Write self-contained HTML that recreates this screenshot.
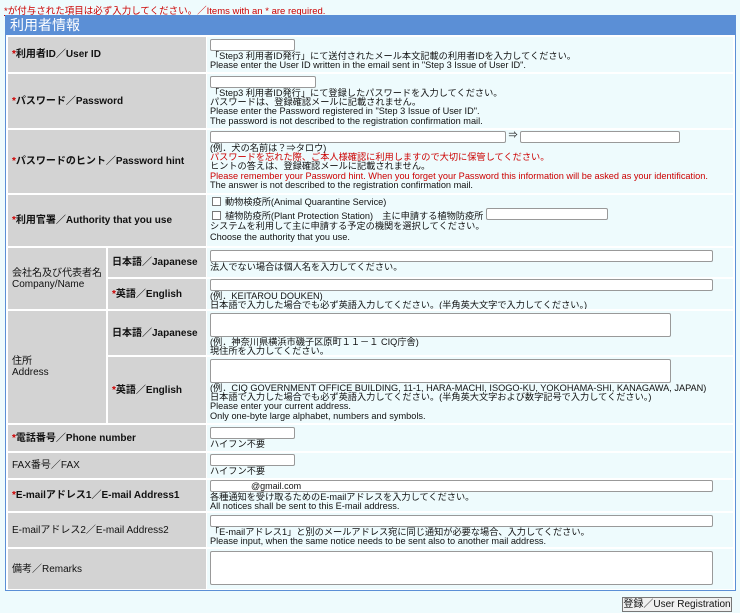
<!DOCTYPE html>
<html><head><meta charset="utf-8"><style>
*{margin:0;padding:0;box-sizing:border-box}
body{width:740px;height:613px;background:#eefbfd;font-family:"Liberation Sans","Noto Sans CJK JP",sans-serif;font-size:9.5px;color:#111;position:relative;overflow:hidden}
.a{position:absolute}
.lab{position:absolute;background:#d3d3d3;font-weight:bold;font-size:10px;display:flex;align-items:center;padding-left:4px;line-height:11px}
.val{position:absolute;background:#eefbfd;left:207px;width:526px;padding:2px 0 0 3px;line-height:9.2px;font-size:9.2px;overflow:hidden}
.r{color:#c00}
.in{display:block;border:1px solid #999;border-radius:2px;background:#fff;height:12px;margin-bottom:1px}
.cb{display:inline-block;width:9px;height:9px;border:1px solid #777;background:#fff;margin:0 4px 0 2px;vertical-align:-1px}
</style></head><body>
<div class="a" style="left:4px;top:3px;font-size:9.5px;color:#c00;text-decoration:underline">*が付与された項目は必ず入力してください。／Items with an * are required.</div>
<div class="a" style="left:5px;top:15px;width:731px;height:576px;background:#fff;border:1px solid #5b8fd6"></div>
<div class="a" style="left:6px;top:16px;width:729px;height:19px;background:#5b8fd6;color:#fff;font-size:14px;padding-left:4px;line-height:19px">利用者情報</div>

<div class="lab" style="left:8px;top:37px;width:198px;height:35px"><span class="r">*</span>利用者ID／User ID</div>
<div class="val" style="top:37px;height:35px"><span class="in" style="width:85px"></span>「Step3 利用者ID発行」にて送付されたメール本文記載の利用者IDを入力してください。<br>Please enter the User ID written in the email sent in "Step 3 Issue of User ID".</div>

<div class="lab" style="left:8px;top:74px;width:198px;height:54px"><span class="r">*</span>パスワード／Password</div>
<div class="val" style="top:74px;height:54px"><span class="in" style="width:106px"></span>「Step3 利用者ID発行」にて登録したパスワードを入力してください。<br>パスワードは、登録確認メールに記載されません。<br>Please enter the Password registered in "Step 3 Issue of User ID".<br>The password is not described to the registration confirmation mail.</div>

<div class="lab" style="left:8px;top:130px;width:198px;height:63px"><span class="r">*</span>パスワードのヒント／Password hint</div>
<div class="val" style="top:130px;height:63px;padding-top:1px"><span class="in" style="width:296px;display:inline-block;vertical-align:top"></span> ⇒ <span class="in" style="width:160px;display:inline-block;vertical-align:top"></span><br>(例．犬の名前は？⇒タロウ)<br><span class="r">パスワードを忘れた際、ご本人様確認に利用しますので大切に保管してください。</span><br>ヒントの答えは、登録確認メールに記載されません。<br><span class="r">Please remember your Password hint. When you forget your Password this information will be asked as your identification.</span><br>The answer is not described to the registration confirmation mail.</div>

<div class="lab" style="left:8px;top:195px;width:198px;height:51px"><span class="r">*</span>利用官署／Authority that you use</div>
<div class="val" style="top:195px;height:51px;line-height:10.5px"><span class="cb"></span>動物検疫所(Animal Quarantine Service)<br><span class="cb" style="margin-top:3px"></span>植物防疫所(Plant Protection Station)　主に申請する植物防疫所 <span class="in" style="display:inline-block;width:122px;height:12px;vertical-align:-2px"></span><br>システムを利用して主に申請する予定の機関を選択してください。<br>Choose the authority that you use.</div>

<div class="lab" style="left:8px;top:248px;width:98px;height:61px;font-weight:normal">会社名及び代表者名<br>Company/Name</div>
<div class="lab" style="left:108px;top:248px;width:98px;height:29px">日本語／Japanese</div>
<div class="lab" style="left:108px;top:279px;width:98px;height:30px"><span class="r">*</span>英語／English</div>
<div class="val" style="top:248px;height:29px"><span class="in" style="width:503px"></span>法人でない場合は個人名を入力してください。</div>
<div class="val" style="top:279px;height:30px;padding-top:0"><span class="in" style="width:503px"></span>(例．KEITAROU DOUKEN)<br>日本語で入力した場合でも必ず英語入力してください。(半角英大文字で入力してください。)</div>

<div class="lab" style="left:8px;top:311px;width:98px;height:112px;font-weight:normal">住所<br>Address</div>
<div class="lab" style="left:108px;top:311px;width:98px;height:44px">日本語／Japanese</div>
<div class="lab" style="left:108px;top:357px;width:98px;height:66px"><span class="r">*</span>英語／English</div>
<div class="val" style="top:311px;height:44px"><span class="in" style="width:461px;height:24px"></span>(例．神奈川県横浜市磯子区原町１１－１ CIQ庁舎)<br>現住所を入力してください。</div>
<div class="val" style="top:357px;height:66px"><span class="in" style="width:461px;height:24px"></span>(例．CIQ GOVERNMENT OFFICE BUILDING, 11-1, HARA-MACHI, ISOGO-KU, YOKOHAMA-SHI, KANAGAWA, JAPAN)<br>日本語で入力した場合でも必ず英語入力してください。(半角英大文字および数字記号で入力してください。)<br>Please enter your current address.<br>Only one-byte large alphabet, numbers and symbols.</div>

<div class="lab" style="left:8px;top:425px;width:198px;height:26px"><span class="r">*</span>電話番号／Phone number</div>
<div class="val" style="top:425px;height:26px"><span class="in" style="width:85px"></span>ハイフン不要</div>
<div class="lab" style="left:8px;top:453px;width:198px;height:25px;font-weight:normal">FAX番号／FAX</div>
<div class="val" style="top:453px;height:25px;padding-top:1px"><span class="in" style="width:85px"></span>ハイフン不要</div>

<div class="lab" style="left:8px;top:480px;width:198px;height:31px"><span class="r">*</span>E-mailアドレス1／E-mail Address1</div>
<div class="val" style="top:480px;height:31px;padding-top:0"><span class="in" style="width:503px;padding-left:40px;line-height:11px;font-size:9px">@gmail.com</span>各種通知を受け取るためのE-mailアドレスを入力してください。<br>All notices shall be sent to this E-mail address.</div>
<div class="lab" style="left:8px;top:513px;width:198px;height:34px;font-weight:normal">E-mailアドレス2／E-mail Address2</div>
<div class="val" style="top:513px;height:34px"><span class="in" style="width:503px"></span>「E-mailアドレス1」と別のメールアドレス宛に同じ通知が必要な場合、入力してください。<br>Please input, when the same notice needs to be sent also to another mail address.</div>
<div class="lab" style="left:8px;top:549px;width:198px;height:40px;font-weight:normal">備考／Remarks</div>
<div class="val" style="top:549px;height:40px"><span class="in" style="width:503px;height:34px"></span></div>

<div class="a" style="left:622px;top:597px;width:110px;height:15px;border:1px solid #777;background:#f0f0f0;font-size:10px;text-align:center;line-height:13px">登録／User Registration</div>
</body></html>
